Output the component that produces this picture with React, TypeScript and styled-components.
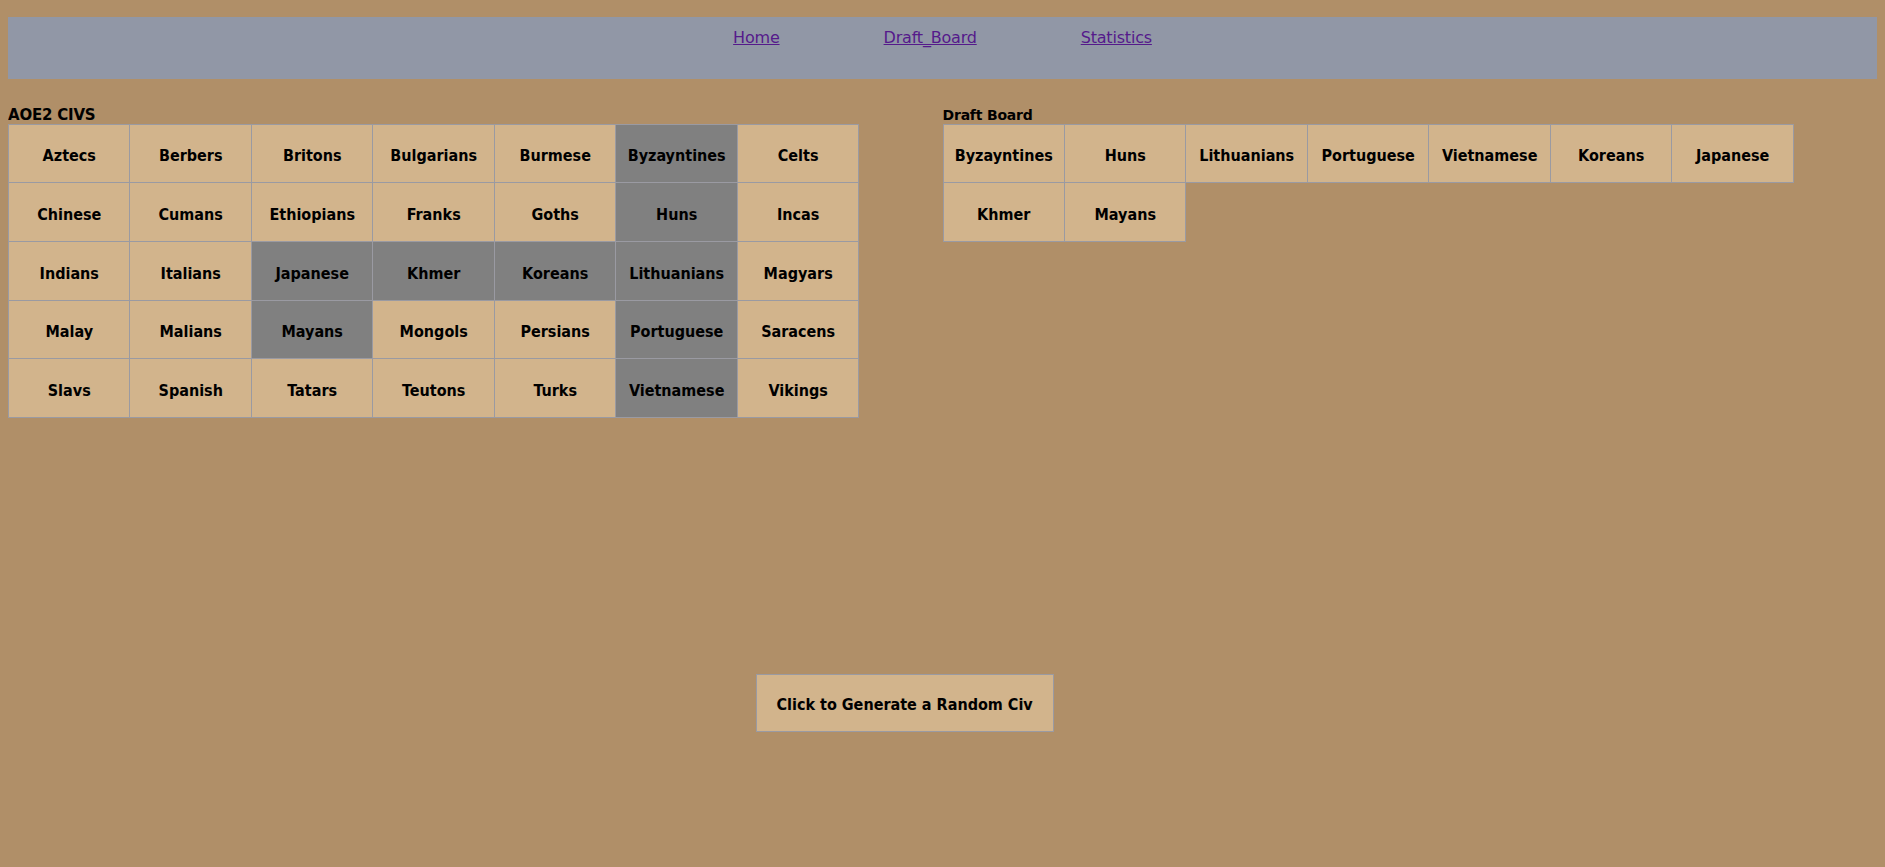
import React from "react";
import styled, { createGlobalStyle } from "styled-components";

const GlobalStyle = createGlobalStyle`
  html, body {
    background: #b08f68;
  }
  body {
    margin: 8px;
    font-family: "DejaVu Sans", sans-serif;
    color: #000;
  }
`;

const NavBar = styled.nav`
  margin-top: 9px;
  height: 62px;
  background: #9197a6;
  display: flex;
  justify-content: center;
  align-items: flex-start;
  gap: 104px;
  padding-top: 11px;
  box-sizing: border-box;
`;

const NavLink = styled.a`
  font-family: "DejaVu Sans", sans-serif;
  font-size: 16px;
  letter-spacing: -0.2px;
  color: #551a8b;
  text-decoration: underline;
  cursor: pointer;
`;

const Boards = styled.div`
  display: flex;
  margin-top: 28px;
`;

const Column = styled.section`
  width: 50%;
`;

const Heading = styled.h2<{ $size?: number }>`
  margin: 0;
  font-family: "DejaVu Sans", sans-serif;
  font-weight: bold;
  font-size: ${(p) => p.$size ?? 14}px;
  letter-spacing: -0.2px;
  line-height: 16.5px;
`;

const Grid = styled.div`
  width: 91%;
  display: grid;
  grid-template-columns: repeat(7, 1fr);
  border-top: 1px solid #9a9aa2;
  border-left: 1px solid #9a9aa2;
`;

const Cell = styled.div<{ $picked?: boolean }>`
  box-sizing: border-box;
  height: 58.7px;
  padding-top: 5px;
  display: flex;
  align-items: center;
  justify-content: center;
  background: ${(p) => (p.$picked ? "#808080" : "#d2b48c")};
  border-right: 1px solid #9a9aa2;
  border-bottom: 1px solid #9a9aa2;
  font-family: "DejaVu Sans Condensed", "DejaVu Sans", sans-serif;
  font-weight: bold;
  font-size: 16px;
  cursor: pointer;
`;

const GenerateButton = styled.button`
  display: block;
  margin: 256px 0 0 40%;
  width: 298px;
  height: 58px;
  box-sizing: border-box;
  background: #d2b48c;
  border: 1px solid #9a9aa2;
  font-family: "DejaVu Sans Condensed", "DejaVu Sans", sans-serif;
  font-weight: bold;
  font-size: 16px;
  color: #000;
  padding: 3px 0 0;
  cursor: pointer;
`;

const civs = [
  "Aztecs", "Berbers", "Britons", "Bulgarians", "Burmese", "Byzayntines", "Celts",
  "Chinese", "Cumans", "Ethiopians", "Franks", "Goths", "Huns", "Incas",
  "Indians", "Italians", "Japanese", "Khmer", "Koreans", "Lithuanians", "Magyars",
  "Malay", "Malians", "Mayans", "Mongols", "Persians", "Portuguese", "Saracens",
  "Slavs", "Spanish", "Tatars", "Teutons", "Turks", "Vietnamese", "Vikings",
];

const drafted = [
  "Byzayntines", "Huns", "Lithuanians", "Portuguese", "Vietnamese", "Koreans", "Japanese",
  "Khmer", "Mayans",
];

export default function App() {
  return (
    <>
      <GlobalStyle />
      <NavBar>
        <NavLink>Home</NavLink>
        <NavLink>Draft_Board</NavLink>
        <NavLink>Statistics</NavLink>
      </NavBar>
      <Boards>
        <Column>
          <Heading $size={15}>AOE2 CIVS</Heading>
          <Grid>
            {civs.map((c) => (
              <Cell key={c} $picked={drafted.includes(c)}>
                {c}
              </Cell>
            ))}
          </Grid>
        </Column>
        <Column>
          <Heading>Draft Board</Heading>
          <Grid>
            {drafted.map((c) => (
              <Cell key={c}>{c}</Cell>
            ))}
          </Grid>
        </Column>
      </Boards>
      <GenerateButton>Click to Generate a Random Civ</GenerateButton>
    </>
  );
}
